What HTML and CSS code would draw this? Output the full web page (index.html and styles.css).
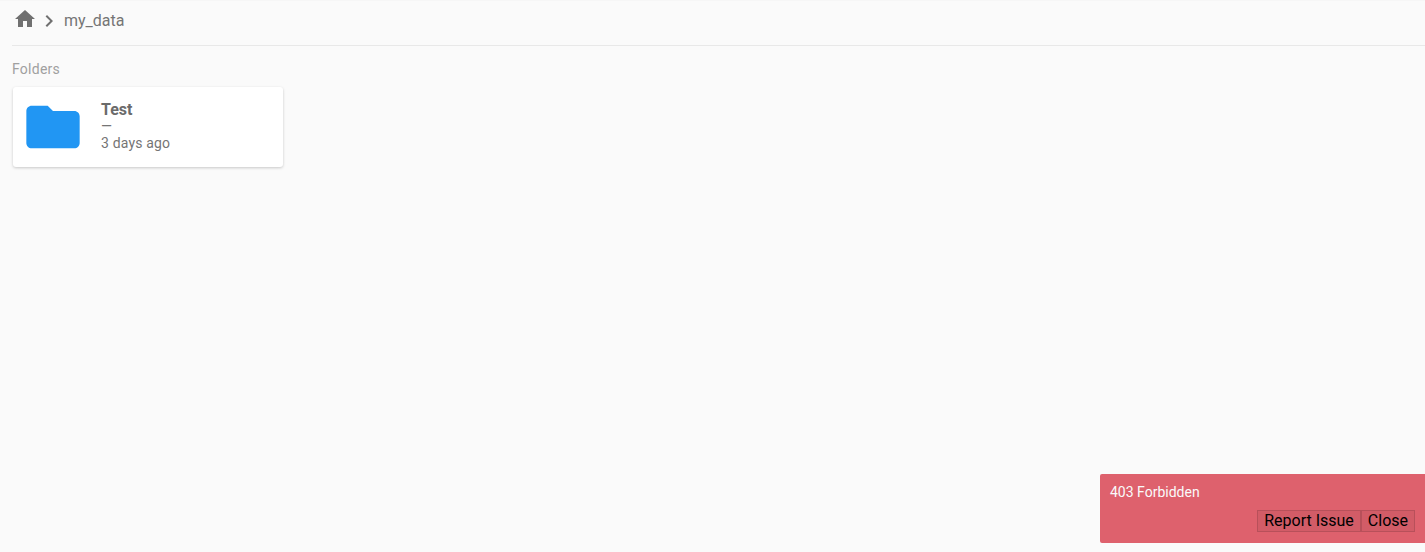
FILE: index.html
```html
<!DOCTYPE html>
<html lang="en">
<head>
<meta charset="utf-8">
<title>my_data</title>
<link rel="stylesheet" href="styles.css">
</head>
<body>
<main class="page">
  <nav class="crumbs">
    <svg class="home" viewBox="0 0 24 24"><path d="M10 20v-6h4v6h5v-8h3L12 3 2 12h3v8z"/></svg>
    <svg class="chev" viewBox="0 0 24 24"><path d="M10 6 8.59 7.41 13.17 12l-4.58 4.58L10 18l6-6z"/></svg>
    <span class="crumb">my_data</span>
  </nav>
  <h2 class="section">Folders</h2>
  <div class="card">
    <svg class="folder" viewBox="0 0 24 24"><path d="M10 4H4c-1.1 0-1.99.9-1.99 2L2 18c0 1.1.9 2 2 2h16c1.1 0 2-.9 2-2V8c0-1.1-.9-2-2-2h-8l-2-2z"/></svg>
    <div class="info">
      <div class="name">Test</div>
      <div class="owner">—</div>
      <div class="date">3 days ago</div>
    </div>
  </div>
</main>
<aside class="toast">
  <div class="msg">403 Forbidden</div>
  <div class="actions">
    <button class="btn">Report Issue</button><button class="btn">Close</button>
  </div>
</aside>
</body>
</html>
```
FILE: styles.css
```css
* { box-sizing: border-box; }
html, body { margin: 0; height: 100%; }
body {
  background: #fafafa;
  font-family: Roboto, "Liberation Sans", sans-serif;
  overflow: hidden;
  box-shadow: inset 0 1px 1px rgba(0,0,0,.02);
}
.page { padding: 0 0 0 12px; }
.crumbs {
  display: flex;
  align-items: center;
  height: 46px;
  border-bottom: 1px solid #e8e8e8;
  padding-bottom: 4px;
}
.home { width: 24px; height: 24px; fill: #707070; margin-left: 1px; margin-top: -3px; }
.chev { width: 24px; height: 24px; fill: #707070; margin-top: 1px; }
.crumb { font-size: 16px; color: #757575; margin-left: 3px; }
.section {
  margin: 15px 0 0;
  font-size: 14px;
  line-height: 16px;
  font-weight: 400;
  letter-spacing: .25px;
  color: #a0a0a0;
}
.card {
  display: flex;
  align-items: center;
  width: 270px;
  height: 80px;
  margin: 10px 0 0 1px;
  padding-left: 8px;
  background: #fff;
  border-radius: 3px;
  box-shadow: 0 1px 3px rgba(0,0,0,.2);
}
.folder { width: 64px; height: 64px; fill: #2196f3; flex: none; }
.info { margin-left: 16px; padding-bottom: 1px; color: #757575; }
.name { font-size: 16px; line-height: 19px; font-weight: 700; color: #6b6b6b; }
.owner { font-size: 14px; line-height: 14px; }
.date { font-size: 14px; line-height: 20px; letter-spacing: .17px; }
.toast {
  position: fixed;
  right: 0;
  bottom: 9px;
  width: 325px;
  height: 69px;
  background: #de616d;
  border-radius: 2px 0 0 2px;
  padding: 10px 10px 0;
}
.msg { font-size: 14px; line-height: 16px; color: #fafafa; }
.actions { display: flex; justify-content: flex-end; margin-top: 10px; }
.btn {
  font: 16px/20px Roboto, "Liberation Sans", sans-serif;
  color: #000;
  height: 22px;
  padding: 0 6px;
  background: rgba(0,0,0,.05);
  border: 1px solid rgba(0,0,0,.12);
}
```
